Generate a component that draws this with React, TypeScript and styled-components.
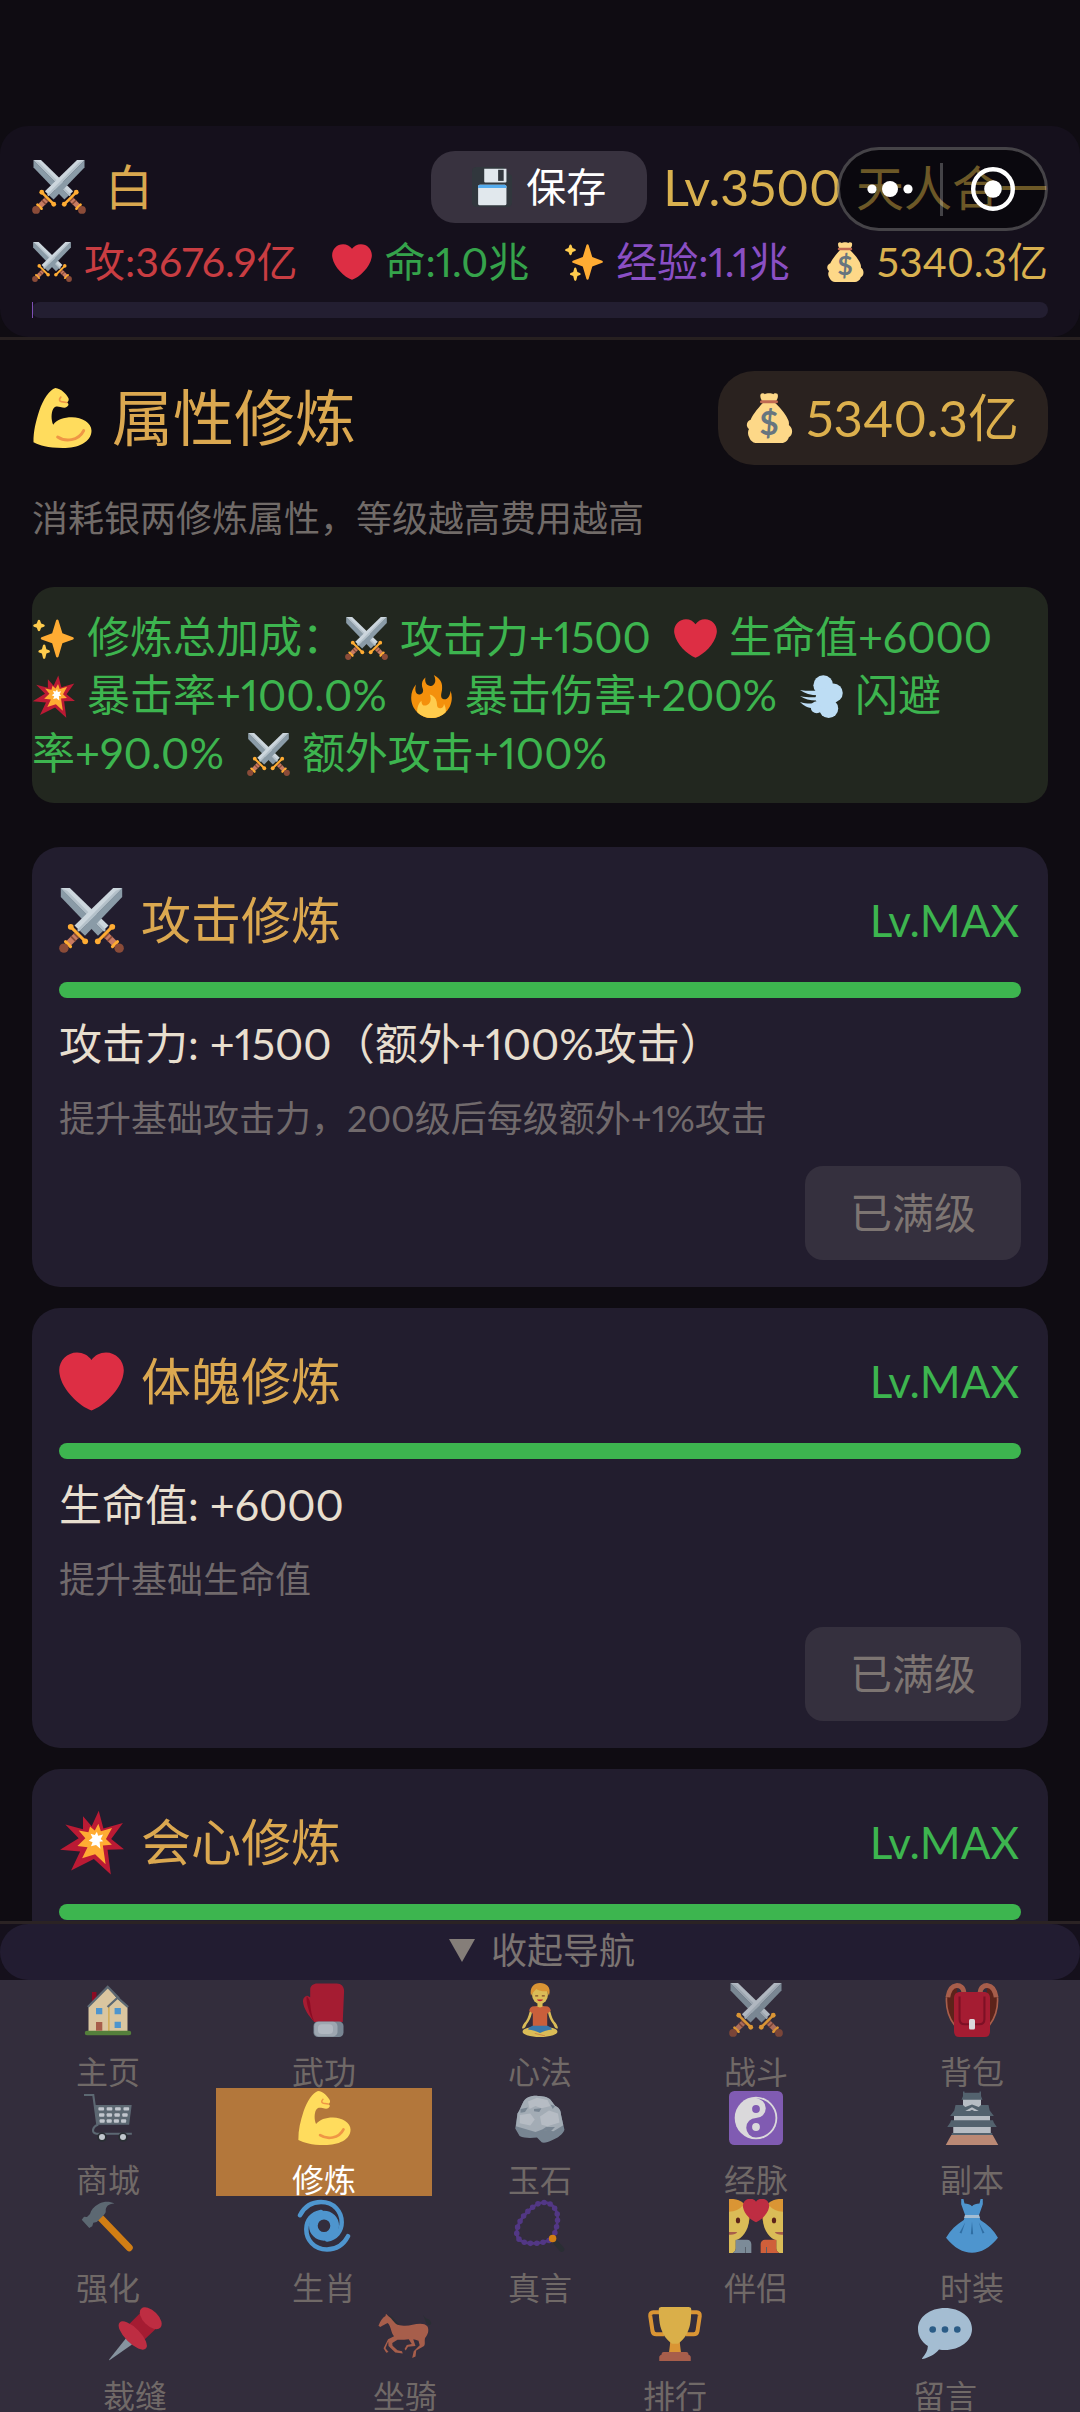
import { ReactNode, useState } from "react";
import styled, { createGlobalStyle } from "styled-components";

const GlobalStyle = createGlobalStyle`
  * {
    box-sizing: border-box;
  }
  body {
    margin: 0;
    background-color: #0f0c12;
    font-family: Lato, "Noto Sans CJK SC", sans-serif;
    font-variant-numeric: proportional-nums;
    -webkit-font-smoothing: antialiased;
  }
  button {
    font-family: inherit;
    border: none;
    padding: 0;
    margin: 0;
    cursor: pointer;
  }
  h1, h2, p {
    margin: 0;
    font-weight: 400;
  }
`;

const Page = styled.div`
  height: 100vh;
  display: flex;
  flex-direction: column;
  padding-top: 126px;
`;

const Header = styled.header`
  flex: none;
  position: relative;
  border-bottom: 3px solid #272020;
`;
const HeaderPanel = styled.div`
  padding: 25px 32px 19px;
  border-radius: 28px;
  background-color: #15101c;
`;
const HeaderTop = styled.div`
  display: flex;
  align-items: center;
  justify-content: space-between;
  height: 72px;
  font-size: 48px;
  line-height: 70px;
  color: #d9a84f;
`;
const PlayerName = styled.div`
  display: flex;
  align-items: center;
  gap: 19px;
`;
const HeaderRight = styled.div`
  display: flex;
  align-items: center;
  gap: 16px;
  white-space: nowrap;
`;
const Level = styled.div`
  display: flex;
  align-items: baseline;
  gap: 14px;
  color: #d9b14f;
`;
const LevelNumber = styled.span`
  font-size: 50px;
`;
const SaveButton = styled.button`
  display: flex;
  align-items: center;
  gap: 14px;
  height: 72px;
  padding: 0 41px;
  border-radius: 24px;
  background-color: #38323f;
  color: #ffffff;
  font-size: 40px;
  line-height: 70px;
`;
const StatRow = styled.div`
  display: flex;
  justify-content: space-between;
  margin-top: 15px;
  white-space: nowrap;
`;
const Stat = styled.span<{ $color: string }>`
  display: flex;
  align-items: center;
  gap: 12px;
  font-size: 41px;
  line-height: 48px;
  color: ${(props) => props.$color};
`;
const ExpTrack = styled.div`
  height: 16px;
  margin-top: 16px;
  border-radius: 8px;
  background-color: #231e31;
`;
const ExpFill = styled.div`
  width: 1px;
  height: 16px;
  background-color: #7d4fb5;
`;

/* floating mini-program menu, lies over the header */
const Capsule = styled.div`
  position: absolute;
  top: 21px;
  right: 32px;
  display: flex;
  align-items: center;
  width: 211px;
  height: 84px;
  padding-right: 2px;
  border: 3px solid rgba(255, 255, 255, 0.24);
  border-radius: 42px;
  background-color: rgba(0, 0, 0, 0.5);
`;
const CapsuleButton = styled.button`
  flex: 1;
  display: flex;
  align-items: center;
  justify-content: center;
  height: 78px;
  background: none;
`;
const CapsuleDivider = styled.span`
  width: 3px;
  height: 53px;
  background-color: rgba(255, 255, 255, 0.24);
`;

const Main = styled.main`
  flex: 1;
  min-height: 0;
  overflow-y: auto;
  scrollbar-width: none;
  padding: 31px 32px 0;
`;
const TitleRow = styled.div`
  display: flex;
  align-items: center;
  justify-content: space-between;
`;
const Title = styled.h1`
  display: flex;
  align-items: center;
  gap: 20px;
  font-size: 61px;
  line-height: 94px;
  color: #dba850;
`;
const Silver = styled.div`
  display: flex;
  align-items: center;
  gap: 12px;
  height: 94px;
  padding: 0 29px 0 26px;
  border-radius: 36px;
  background-color: #2a221f;
  font-size: 51px;
  line-height: 94px;
  color: #dcb04d;
`;
const Hint = styled.p`
  margin-top: 28px;
  font-size: 36px;
  line-height: 50px;
  color: #716b68;
`;
const Bonus = styled.p`
  margin-top: 44px;
  padding: 21px 0;
  border-radius: 22px;
  background-color: #22271f;
  font-size: 43px;
  line-height: 58px;
  color: #3db54f;
`;
const Keep = styled.span`
  white-space: nowrap;
`;
const BonusIcon = styled.span<{ $first?: boolean }>`
  display: inline-block;
  vertical-align: -7px;
  height: 43px;
  line-height: 0;
  margin-right: 12px;
  margin-left: ${(props) => (props.$first ? 0 : 12)}px;
`;

const CardList = styled.div`
  display: flex;
  flex-direction: column;
  gap: 21px;
  margin-top: 44px;
`;
const Card = styled.section`
  padding: 27px;
  border-radius: 28px;
  background-color: #221d2e;
`;
const CardHead = styled.div`
  display: flex;
  align-items: center;
  justify-content: space-between;
  height: 92px;
`;
const CardTitle = styled.h2`
  display: flex;
  align-items: center;
  gap: 17px;
  font-size: 50px;
  line-height: 92px;
  color: #dba850;
`;
const CardLevel = styled.span`
  padding-right: 2px;
  font-size: 44px;
  color: #3db54f;
`;
const Track = styled.div`
  height: 16px;
  margin-top: 16px;
  border-radius: 8px;
  background-color: #3db54f;
`;
const CardValue = styled.p`
  margin-top: 16px;
  font-size: 43px;
  line-height: 60px;
  color: #e8dfcf;
`;
const CardDesc = styled.p`
  margin-top: 19px;
  font-size: 36px;
  line-height: 50px;
  color: #716a6c;
`;
const CardFoot = styled.div`
  display: flex;
  justify-content: flex-end;
  margin-top: 23px;
`;
const TrainButton = styled.button`
  width: 216px;
  height: 94px;
  border-radius: 18px;
  background-color: #35303e;
  color: #7d7572;
  font-size: 42px;
  line-height: 94px;
`;

const Footer = styled.footer`
  flex: none;
  border-top: 3px solid #2b2324;
  background-color: #15101c;
`;
const ToggleButton = styled.button`
  display: flex;
  align-items: center;
  justify-content: center;
  gap: 16px;
  width: 100%;
  height: 56px;
  padding: 0 0 4px 4px;
  border-radius: 28px;
  background-color: #221c31;
  color: #7b7472;
  font-size: 36px;
  line-height: 52px;
`;
const Arrow = styled.span<{ $open: boolean }>`
  border-left: 13px solid transparent;
  border-right: 13px solid transparent;
  border-top: 23px solid #857e79;
  transform: ${(props) => (props.$open ? "none" : "rotate(180deg)")};
`;
const NavRow = styled.nav`
  display: flex;
  background-color: #332d3c;
`;
const NavItem = styled.button<{ $active: boolean }>`
  flex: 1;
  display: flex;
  flex-direction: column;
  align-items: center;
  gap: 19px;
  height: 108px;
  padding-top: 3px;
  background-color: ${(props) => (props.$active ? "#b3773b" : "transparent")};
  color: ${(props) => (props.$active ? "#ffffff" : "#706967")};
  font-size: 32px;
  line-height: 32px;
  svg {
    opacity: ${(props) => (props.$active ? 1 : 0.82)};
  }
`;

const IconSvg = styled.svg<{ $size: number }>`
  flex: none;
  display: block;
  width: ${(props) => props.$size}px;
  height: ${(props) => props.$size}px;
`;

const HEART =
  "M35.885 11.833c0-5.45-4.418-9.868-9.867-9.868-3.308 0-6.227 1.633-8.018 4.129-1.791-2.496-4.71-4.129-8.017-4.129-5.45 0-9.868 4.417-9.868 9.868 0 .772.098 1.52.266 2.241C1.751 22.587 11.216 31.568 18 34.034c6.783-2.466 16.249-11.447 17.617-19.959.17-.721.268-1.469.268-2.242z";

const sword = (
  <>
    <path fill="#CCD6DD" d="M35 0h-5L8.6 20.8l2.9 2.9z" />
    <path fill="#8A9BA7" d="M35 0v5L14.4 26.4l-2.9-2.7z" />
    <path fill="#B4C1CA" d="M35 0L11 24.2l-1-1L31.500 1.500z" />
    <path stroke="#C67A62" strokeWidth="3.600" d="M9.800 26.200L4.400 31.600" />
    <path stroke="#8A4B38" strokeWidth="1" d="M6.600 26.800l2.600 2.600M8.300 25.100l2.600 2.600" />
    <path stroke="#FFAC33" strokeWidth="1.700" strokeLinecap="round" d="M6.700 21.700l7.800 7.800M3.600 29.700l2.800 2.800" />
    <circle cx="6.500" cy="21.500" r="1.600" fill="#FFAC33" />
    <circle cx="14.500" cy="29.500" r="1.600" fill="#FFAC33" />
    <circle cx="2.700" cy="33.300" r="2.600" fill="#8A4B38" />
  </>
);

const lover = (shirt: string) => (
  <>
    <path fill="#FFAC33" d="M0 0c6-.6 12 2.500 13.600 9 .6 3.500-.2 7-1.600 9L0 14z" />
    <path fill="#FFDC5D" d="M0 8.500c4-.2 7-1.500 9-4 1.500 2.500 4.300 4 4.300 9.500C13.300 21 8 27 4.500 27.500V33c0 1.500-1 2.500-2 3H0z" />
    <path fill={shirt} d="M4.500 27.200H12c1.800 0 2.900 1.300 2.900 3V36H2.500c1.200-.8 2-1.800 2-3z" />
    <path stroke="#5C6870" strokeWidth=".600" d="M11 32v4" />
    <ellipse cx="6" cy="14.300" rx="1.400" ry="1.900" fill="#662113" />
    <path fill="#C1694F" d="M0 22h5.500c-.8 1.300-2.500 2-5.500 1.800z" />
  </>
);

const cartCells = [11.2, 16.700, 22.300, 27.900];

const icons: Record<string, ReactNode> = {
  swords: (
    <>
      <g transform="matrix(-1 0 0 1 36 0)">{sword}</g>
      {sword}
    </>
  ),
  heart: <path fill="#DD2E44" d={HEART} />,
  sparkles: (
    <>
      <path fill="#FFAC33" d="M34.347 16.893l-8.899-3.294-3.323-10.891c-.128-.42-.517-.708-.956-.708-.439 0-.828.288-.956.708l-3.322 10.891-8.9 3.294c-.393.146-.653.519-.653.938 0 .418.26.793.653.938l8.895 3.293 3.324 11.223c.126.424.516.715.959.715.442 0 .833-.291.959-.716l3.324-11.223 8.896-3.293c.391-.144.652-.518.652-.937 0-.418-.261-.792-.653-.938z" />
      <path fill="#FFCC4D" d="M14.347 27.894l-2.314-.856-.9-3.3c-.118-.436-.513-.738-.964-.738-.451 0-.846.302-.965.737l-.9 3.3-2.313.856c-.393.145-.653.52-.653.938 0 .418.26.793.653.938l2.301.853.907 3.622c.112.444.511.756.97.756.459 0 .858-.312.97-.757l.907-3.622 2.301-.853c.393-.144.653-.519.653-.937 0-.418-.26-.793-.653-.937zM10.009 6.231l-2.364-.875-.876-2.365c-.145-.393-.519-.653-.938-.653-.418 0-.792.26-.938.653l-.875 2.365-2.365.875c-.393.146-.653.52-.653.938 0 .418.26.793.653.938l2.365.875.875 2.365c.146.393.52.653.938.653.418 0 .792-.26.938-.653l.875-2.365 2.365-.875c.393-.146.653-.52.653-.938 0-.418-.26-.792-.653-.938z" />
    </>
  ),
  moneybag: (
    <>
      <path fill="#FDD888" d="M31.900 19.700C30.800 16.500 27.500 12 22.300 7h-8.600C9 12 5.500 17 4.800 19.200c-2 .6-3 2.600-2.700 4.400.2 1.100.9 1.800 1.500 2.400-1 1.700-1 4 .2 6C5 35 7.200 36 9 36h18c2 0 4.300-1.200 5.300-4.200 1.800-1 2.700-3 2.200-5.400-.3-1.600-1.200-2.600-2.200-3.400.2-1.300 0-2.400-.4-3.300z" />
      <path fill="#FDD888" d="M24 .6c-1-.9-2.600-.4-3 .3-.8-1-5-1-6 0-.6-.8-2.400-1-3 0-.7 1 .1 4 1.200 5h9.600c1.300-1 2.200-4 1.200-5.300z" />
      <path fill="#BF6952" d="M12.600 5.200h10.800a1 1 0 0 1 0 2.200H12.600a1 1 0 0 1 0-2.200z" />
      <text x="18" y="30" textAnchor="middle" fontFamily="Lato, sans-serif" fontWeight="700" fontSize="24" fill="#67757F">$</text>
    </>
  ),
  floppy: (
    <>
      <path fill="#31373D" d="M4 0h24l8 8v24a4 4 0 0 1-4 4H4a4 4 0 0 1-4-4V4a4 4 0 0 1 4-4z" />
      <path fill="#E1E8ED" d="M11 1.500h20V13a1 1 0 0 1-1 1H12a1 1 0 0 1-1-1z" />
      <path fill="#31373D" d="M23.500 2.500h5v10h-5z" />
      <rect x="5.500" y="16" width="25.500" height="18.500" rx="1.500" fill="#E1E8ED" />
      <path fill="#55ACEE" d="M7 16h22.500a1.500 1.500 0 0 1 1.500 1.500V19H5.500v-1.500A1.500 1.500 0 0 1 7 16z" />
    </>
  ),
  muscle: (
    <>
      <path fill="#FFDC5D" d="M14 0c-3.500 1-7.400 7-9.600 13.500C2.300 20 .8 26 .9 32.600 5 34.500 9 36 18.500 36c9 0 17.200-3.500 17.200-10.400C35.700 21 30 17.600 24 17.600c-5 0-8.900 1.400-11.300 4.400-1.300-3-1.200-7.200 0-9.400 1-1.800 2.600-1.600 4.300-1.200 2.300.5 3.700.8 4.800-1 .3-.9-.3-1.400-.9-1.700.9-.5 1.400-1.500 1-2.600C20.500 3.500 17.500.3 14 0z" />
      <path fill="none" stroke="#EF9645" strokeWidth="1.800" strokeLinecap="round" d="M15.400 29.400c4.500 3 12.500 2.500 15.600-3.800" />
      <path fill="none" stroke="#EF9645" strokeWidth="1" strokeLinecap="round" d="M17.300 5.500c-1.300 1.300-.9 2.400.3 2.700l3.200.5" />
    </>
  ),
  collision: (
    <>
      <path fill="#BB1A34" d="M22 .4l2.600 9.800 10.800-3-6.500 8.900 7.100 5.600-9.100.3 1.800 13.700-9.400-8.500-12.600 6.300 5-10.500-11.100-1 10.300-6.400-7.400-7.500 9.800 2.500V3.500L18.100 9z" />
      <path fill="#FFAC33" d="M21.800 7.600l1.400 4.200 6.200-1.900-3.400 6.200 3.300 3.200-5 .3 1.500 10.400-5.800-5.500-7.200 2.200 3-6.100-5.600-.7 4.400-4.300-3.700-4.300 5.400 1 .9-3.200 2.600 2.200z" />
      <path fill="#fff" d="M21 12l.7 2.300 2.700-.8-1.300 2.500 1.400 1.300-2 .3.4 3.800-2.400-2-2.800.7.9-2.300-2.100-.8 2-1.600-1-2.200 2.300.7z" />
    </>
  ),
  fire: (
    <>
      <path fill="#F4900C" d="M35 19c0-2.062-.367-4.039-1.04-5.868-.46 5.389-3.333 8.157-6.335 6.868-2.812-1.208-.917-5.917-.777-8.164.236-3.809-.012-8.169-6.931-11.794 2.875 5.5.333 8.917-2.333 9.125-2.958.231-5.667-2.542-4.667-7.042-3.238 2.386-3.332 6.402-2.333 9 1.042 2.708-.042 4.958-2.583 5.208-2.84.28-4.418-3.041-2.963-8.333C2.52 10.965 1 14.805 1 19c0 9.389 7.611 17 17 17s17-7.611 17-17z" />
      <path fill="#FFCC4D" d="M28.394 23.999c.148 3.084-2.561 4.293-4.019 3.709-2.106-.843-1.541-2.291-2.083-5.291s-2.625-5.083-5.708-6c2.25 6.333-1.247 8.667-3.08 9.084-1.872.426-3.753-.001-3.968-4.007C7.352 23.668 6 26.676 6 30c0 .368.023.73.055 1.09C9.125 34.124 13.342 36 18 36s8.875-1.876 11.945-4.91c.032-.36.055-.722.055-1.09 0-2.187-.584-4.236-1.606-6.001z" />
    </>
  ),
  dash: (
    <g fill="#BDDDF4">
      <circle cx="19.500" cy="8.500" r="8.300" />
      <circle cx="28" cy="15" r="7.800" />
      <circle cx="24" cy="28" r="8" />
      <circle cx="14" cy="27" r="5" />
      <circle cx="21" cy="19" r="8" />
      <path d="M0 12.500c5 .8 9 1 15 .5v4C9 17 4 15.500 0 12.500zM0 17.500c5 1.200 9 1.300 15 1v2.800c-6 .2-11-1-15-3.800zM0 22.500c4.500 1.500 8.500 1.700 14 1v4C8 28.500 3.500 26 0 22.500z" />
    </g>
  ),
  house: (
    <>
      <path fill="#A0041E" d="M7.300 6h3v8h-3z" />
      <path fill="#FFE8B6" d="M5 15L17.800 3l6 7 7.200 6v16.500H5z" />
      <path stroke="#F4C242" strokeWidth=".800" d="M18.600 16v16" />
      <path fill="none" stroke="#66757F" strokeWidth="1.500" d="M4.600 16L17.800 2.600l7.500 7.600" />
      <path fill="none" stroke="#66757F" strokeWidth="1.500" d="M17.700 16l6.700-6.200 7 6.300" />
      <path fill="#5C913B" d="M4 31.800h28a1.500 1.500 0 0 1 0 3H4a1.500 1.500 0 0 1 0-3z" />
      <path fill="#55ACEE" d="M10 16.700h4.200v4.200H10zM22.400 16.700h4.200v4.200h-4.200zM22.400 25.800h4.200V30h-4.200z" />
      <path fill="#C1694F" d="M10 26h4.200v5.800H10z" />
    </>
  ),
  glove: (
    <>
      <path fill="#BE1931" d="M8.800 4.500C8.800 1.800 11 .4 13.500.4h13c3 0 4.900 2 4.900 5L30.500 26H11.500C8 22 4.500 17.500 4 12.500 3.800 10.200 5.500 8.500 7 8.500l1.800 1z" />
      <path fill="#A0041E" d="M6.500 8.700c1.500 1.800 2.300 3.400 2.400 5.800.2 3 .9 7.500 2.600 11.300C9 23 7.500 17 6.800 14c-.4-2-.6-4-.3-5.300z" />
      <rect x="11" y="25.600" width="20" height="10.400" rx="3" fill="#8899A6" />
      <rect x="11.500" y="25.800" width="15.500" height="9.800" rx="3" fill="#B5C1CA" />
      <rect x="14" y="27.500" width="10" height="6.500" rx="2.500" fill="#CCD6DD" />
    </>
  ),
  lotus: (
    <>
      <path fill="#FFDC5D" d="M16.300 12h3.400v3.500l4.300 1.300c1.500 3.200 1.600 6.200 3.400 8.700 1.700 1.700 2.300 3 2.600 4.700-1.500.7-2.500-1-3-2.500-2.200-2.700-3-5-3.600-7.700H12.600c-.6 2.700-1.400 5-3.600 7.700-.5 1.500-1.500 3.200-3 2.500.3-1.700.9-3 2.600-4.700 1.800-2.500 1.900-5.500 3.400-8.700l4.300-1.300z" />
      <path fill="#EA6A3B" d="M14 15.500h2c1 1 3 1 4 0h2c1.800 0 3 1.200 3.200 3l-2.400 2V29h-9.600v-8.500l-2.400-2c.2-1.800 1.400-3 3.200-3z" />
      <path fill="#FFDC5D" d="M9.500 30c4-1.200 13-1.200 17 0 3 .8 4 2.500 2.300 3.800-2.800 1.500-5.500 1.800-8.300 2.200h-5c-2.800-.4-5.500-.7-8.300-2.200C5.500 32.500 6.500 30.800 9.500 30z" />
      <path fill="#3B88C3" d="M13 28.500h10c1.500.5 2.500 1.400 3 2.500-3 .3-5.500 1-8 2.300-2.500-1.300-5-2-8-2.300.5-1.100 1.500-2 3-2.500z" />
      <path stroke="#EF9645" strokeWidth=".600" d="M14.500 33.600l6.800 1.600" />
      <ellipse cx="18" cy="8" rx="5.300" ry="5.800" fill="#FFDC5D" />
      <path fill="#FFAC33" d="M12 8.500C10.800 3 14 0 18 0s7.800 2.500 6 8.500l-1.300-3C20 5.800 17 5 15.500 4c-1 1.500-2.700 2.500-3.500 4.500z" />
      <path stroke="#662113" strokeWidth=".600" d="M14.800 8.600h2M19.200 8.600h2" />
      <path fill="#DF1F32" d="M16 11h4c-.5 1.500-3.500 1.500-4 0z" />
    </>
  ),
  backpack: (
    <>
      <path fill="#662113" d="M6 28C2 23 .5 16 1 9.500 1.800 4 4.500 1.500 8 3v20zM30 28c4-5 5.500-12 5-18.500C34.200 4 31.500 1.500 28 3v20z" />
      <path fill="none" stroke="#C1694F" strokeWidth="1.100" d="M6.300 28C2.500 23 .6 16 1 9.500M29.700 28c3.800-5 5.700-12 5.300-18.500" />
      <path fill="none" stroke="#C1694F" strokeWidth="3.200" d="M12.600 7C12.600 3 10 1.500 7.500 1.700 4.600 2 2.600 5 1.900 9.500M23.400 7c0-4 2.600-5.500 5.100-5.300 2.900.3 4.900 3.300 5.600 7.800" />
      <path fill="#BE1931" d="M10 6h16c2.500 0 4 1.500 4 4v22c0 2.500-1 4-3.500 4h-17C7 36 6 34.500 6 32V10c0-2.500 1.500-4 4-4z" />
      <path fill="none" stroke="#8E0A20" strokeWidth="1.400" d="M9.700 9v15c0 2.500 1 3.500 3.500 3.500h9.600c2.500 0 3.500-1 3.500-3.500V9" />
      <rect x="16" y="24" width="4" height="7" rx="1" fill="#fff" />
    </>
  ),
  cart: (
    <>
      <path fill="none" stroke="#66757F" strokeWidth="1.400" d="M2 2.700h6.200l2.700 20c-3.500 1.500-4 5.500-.5 5.800h23.500" />
      <path fill="#66757F" d="M9.300 9.300h24.500l-1.700 13.200H10.900z" />
      {[10.800, 14.900, 18.900].map((y, row) =>
        cartCells.map((x, i) => (
          <rect key={`${y}${i}`} x={x - row * (i - 1) * 0.400 + 0.400} y={y} width={3.800 - row * 0.200} height="2.200" rx=".600" fill="#E1E8ED" />
        ))
      )}
      <circle cx="14" cy="30.700" r="3.200" fill="#292F33" />
      <circle cx="28" cy="30.700" r="3.200" fill="#292F33" />
      <circle cx="14" cy="30.700" r="2" fill="#E1E8ED" />
      <circle cx="28" cy="30.700" r="2" fill="#E1E8ED" />
    </>
  ),
  rock: (
    <>
      <path fill="#8899A6" d="M7 7c2-3 6-4 9.600-3.700 3 0 6.500.5 8.400 2.500l3 4c2.500 1 4 3 4 6l2.300 10c-1 3-4.500 5.500-8.300 7-2.500 1.200-4.500 2-6.700 1.600L16 31c-4.500.5-8.500.5-11.600-1L1.500 25 3 15c1.500-2 2.500-5 4-8z" />
      <path fill="#BCC8D0" d="M7 7c2-3 6-4 9.600-3.700 3 0 6.500.5 8.400 2.500l3 4c2.500 1 4 3 4 6l1.500 7-6.500 4-8-1-4 1.500L2 23.500 3 15c1.500-2 2.500-5 4-8z" />
      <path fill="#D3DCE2" d="M10 7l6-2.500L23 6l2 4-6 1.500-4-1.500-4 2zM18 17l6-4 6 2 1 6-8 2.500-4-1zM4.500 16l7-1 3 4-3 4-7-1.500z" />
      <path fill="#8899A6" d="M14 12l5-.5-1.500 2.500-3.500-.5zM25 9l3 1-1.500 2zM5 12l5-1-2 3-3 .5zM22 24h6l-3 3-6-1zM3 25l5 2 6 .5-1 2-8-1z" />
    </>
  ),
  yinyang: (
    <>
      <rect width="36" height="36" rx="3.600" fill="#9266CC" />
      <circle cx="18" cy="18" r="14.200" fill="#fff" />
      <path fill="#9266CC" d="M18 5a13 13 0 0 1 0 26 6.500 6.500 0 0 1 0-13 6.500 6.500 0 0 0 0-13z" />
      <circle cx="18" cy="12" r="2.600" fill="#9266CC" />
      <circle cx="18" cy="24" r="2.600" fill="#fff" />
    </>
  ),
  castle: (
    <>
      <path fill="#D5DDE2" d="M12 5h12v6H12zM6 16h24v4H6zM5.500 23h25v5.500h-25z" />
      <path fill="#5B6E7A" d="M12 .400h1v.800h10V.400h1v3l1 2.400H11l1-2.400zM7 9.400h5l1.500 1.200L18 9l4.500 1.600L24 9.400h5l.8 3.600 2.800 3.600H3.400L6.200 13zM4 19.500h28l.5 1.500 2 3H1.500l2-3zM4.500 28h27v1.500h-27z" />
      <path fill="#D5DDE2" d="M18 10.800l4.500 2.500h-3L18 12.500l-1.500.8h-3z" />
      <path fill="#D99E82" d="M4.200 29.300h27.600L35.500 36H.500z" />
    </>
  ),
  hammer: (
    <>
      <path stroke="#F4900C" strokeWidth="4.600" strokeLinecap="round" d="M13 12.500l19.200 20" />
      <path fill="#66757F" d="M22.300 3C18 3 16.300 5.500 16.500 8c.1 1.200-.6 2-1.500 2.800l-4.500 4.500-2.300.6-.7 2.300-2 1.200-5-5.600 1.500-2 2 .2 2-2C6.500 7.500 8.500 5 12 3.200c3.500-1.700 7-1.700 10.300-.2z" />
    </>
  ),
  cyclone: (
    <g fill="none" stroke="#55ACEE" strokeLinecap="round">
      <circle cx="18" cy="17.800" r="7.100" strokeWidth="5.800" />
      <path strokeWidth="3" d="M2 10.800C5 5 10 2 16 2c8.800 0 13.800 6.500 13.800 13.500 0 6-3.800 10.500-9.800 11.500" />
      <path strokeWidth="3" d="M34 24.800C31 30.600 26 33.600 20 33.600c-8.800 0-13.800-6.500-13.800-13.500 0-6 3.800-10.500 9.800-11.500" />
    </g>
  ),
  beads: (
    <>
      <path fill="none" stroke="#5A3A96" strokeWidth="1.800" d="M26.400 26.400C28.500 22 31 13 29 8.500 26.500 2 20 .5 14.500 4.500 8 9 2.500 16 2.500 22.500 2.500 30 12 30.500 20 28.800c3-.8 5-1.300 6.400-2.400z" />
      <path fill="none" stroke="#5A3A96" strokeWidth="3.700" strokeLinecap="round" strokeDasharray="0 4.200" d="M26.400 26.400C28.500 22 31 13 29 8.500 26.500 2 20 .5 14.500 4.500 8 9 2.500 16 2.500 22.500 2.500 30 12 30.500 20 28.800c3-.8 5-1.300 6.400-2.400z" />
      <path stroke="#292F33" strokeWidth="3.500" strokeLinecap="round" d="M28.500 29l4 4.500" />
      <circle cx="26.400" cy="26.400" r="2.500" fill="#F4900C" />
    </>
  ),
  couple: (
    <>
      {lover("#8DA0AD")}
      <g transform="matrix(-1 0 0 1 36 0)">{lover("#F26B3A")}</g>
      <path fill="#DD2E44" transform="translate(9.200 -1.200) scale(.49)" d={HEART} />
    </>
  ),
  dress: (
    <>
      <path fill="#55ACEE" d="M10.800 0h1.500l.7 3c2 0 4 .6 5 1.800C19 3.600 21 3 23 3l.7-3h1.500v3.500L22.600 11l1 3c5 3 9 7 11.700 11.800C30 32.500 24 35.800 18 35.800S6 32.500.7 25.800C3.500 21 7.500 17 12.500 14l1-3-2.700-7.500z" />
      <path fill="#BDDDF4" d="M13.300 10.600h9.400l.6 2H12.700z" />
      <path fill="#2F7DBB" d="M18 15l.8 8.500h-1.600zM13.500 15.500L11 23l-1.300-.5zM22.500 15.500L25 23l1.300-.5z" />
    </>
  ),
  pushpin: (
    <>
      <path fill="#99AAB5" d="M12 20.800l4 4.200L1 35.500c-.4 0-.3-.4 0-.9z" />
      <path fill="#BE1931" d="M22 3.500L32.500 14l-8.500 8L14 11.500z" />
      <ellipse cx="16.500" cy="19" rx="12.300" ry="5" transform="rotate(45 16.500 19)" fill="#DD2E44" />
      <ellipse cx="28.500" cy="7.500" rx="9" ry="5" transform="rotate(45 28.500 7.500)" fill="#DD2E44" />
    </>
  ),
  horse: (
    <>
      <path fill="#292F33" d="M30 5c1.500 4 5 2 5.500 6-1 1.500-2 1-3 .5zM7 5.500c3 1 5 4 7 6l-2 1-5-5z" />
      <path fill="#C1694F" d="M.3 12.500C1.500 9.500 3 7 5 6l.3-1.500L7 6.200c2.500 1.500 3.500 4.500 6 5.600 4.500 1 7 .7 10 0 4-.8 8-1.300 10 1.200 1.200 2.500.3 5.500-1.500 7.500-.8 2 .3 4-.8 5.500L25.500 29l-.5 4-2.200 1 1-4.500 4-4-.8-3c-1.500-.5-2.500-.8-3.500-1l1.500 4.500-5 .5-1.500 2.500-.8-1 1.500-2.700 3.300-.6-2-3.200c-3 .3-5.500.5-7.500.3L9.500 24l.2 1.800 3.300 3 3 .7.5 1.500-5-.7-4.500-4.300-.2-3L5 27.500l2 2.500-1.500.5-1.800-3 3-6 4-2C8.500 17 9 13.500 6.500 10.700c-1.500.3-3 1.800-5 2.600z" />
    </>
  ),
  trophy: (
    <>
      <path fill="none" stroke="#FFAC33" strokeWidth="2.700" d="M9 3.500H3.500C2 3.500 1.400 4.500 1.500 6L3 16c.3 1.500 1 2.200 2.500 2.200H11M27 3.500h5.500c1.500 0 2.100 1 2 2.500L33 16c-.3 1.500-1 2.200-2.500 2.200H25" />
      <path fill="#FFAC33" d="M15 22h6l1 8.500h-8z" />
      <path fill="#FFCC4D" d="M7.200 1.500C7.200.5 8 0 9 0h18c1 0 1.800.5 1.800 1.500 0 8-.8 12.500-3.300 17-1.700 3-3.500 4.500-5.500 6h-4c-2-1.500-3.800-3-5.500-6-2.500-4.500-3.300-9-3.300-17z" />
      <path fill="#C1694F" d="M10.500 30h15c1 0 1.500.8 1.500 1.800.8.200 1.500.8 1.500 1.700V36h-21v-2.500c0-.9.7-1.500 1.500-1.700 0-1 .5-1.800 1.500-1.800z" />
    </>
  ),
  speech: (
    <>
      <path fill="#BDDDF4" d="M18 .700c10 0 18 6 18 14s-8 14-18 14c-1.300 0-2.700 0-4-.3-2.500 3-6.500 5.500-11 6.300-.6 0-.4-.4 0-.8C5 31.500 6.500 29 6.600 26 2.500 23.500 0 19.500 0 14.700 0 6.700 8 .7 18 .7z" />
      <circle cx="9.800" cy="15" r="2.200" fill="#2A6797" />
      <circle cx="18" cy="15" r="2.200" fill="#2A6797" />
      <circle cx="26.200" cy="15" r="2.200" fill="#2A6797" />
    </>
  ),
};

function Icon({ name, size }: { name: string; size: number }) {
  return (
    <IconSvg $size={size} viewBox="0 0 36 36" fill="none" aria-hidden="true">
      {icons[name]}
    </IconSvg>
  );
}

interface ITraining {
  icon: string;
  name: string;
  value?: string;
  desc?: string;
}

const trainings: ITraining[] = [
  { icon: "swords", name: "攻击修炼", value: "攻击力: +1500（额外+100%攻击）", desc: "提升基础攻击力，200级后每级额外+1%攻击" },
  { icon: "heart", name: "体魄修炼", value: "生命值: +6000", desc: "提升基础生命值" },
  { icon: "collision", name: "会心修炼" },
];

const navRows = [
  [
    { icon: "house", label: "主页" },
    { icon: "glove", label: "武功" },
    { icon: "lotus", label: "心法" },
    { icon: "swords", label: "战斗" },
    { icon: "backpack", label: "背包" },
  ],
  [
    { icon: "cart", label: "商城" },
    { icon: "muscle", label: "修炼" },
    { icon: "rock", label: "玉石" },
    { icon: "yinyang", label: "经脉" },
    { icon: "castle", label: "副本" },
  ],
  [
    { icon: "hammer", label: "强化" },
    { icon: "cyclone", label: "生肖" },
    { icon: "beads", label: "真言" },
    { icon: "couple", label: "伴侣" },
    { icon: "dress", label: "时装" },
  ],
  [
    { icon: "pushpin", label: "裁缝" },
    { icon: "horse", label: "坐骑" },
    { icon: "trophy", label: "排行" },
    { icon: "speech", label: "留言" },
  ],
];

function App() {
  const [active, setActive] = useState("修炼");
  const [navOpen, setNavOpen] = useState(true);

  return (
    <Page>
      <GlobalStyle />
      <Header>
        <HeaderPanel>
          <HeaderTop>
            <PlayerName>
              <Icon name="swords" size={54} />
              <span>白</span>
            </PlayerName>
            <HeaderRight>
              <SaveButton type="button">
                <Icon name="floppy" size={40} />
                保存
              </SaveButton>
              <Level>
                <LevelNumber>Lv.3500</LevelNumber>
                <span>天人合一</span>
              </Level>
            </HeaderRight>
          </HeaderTop>
          <StatRow>
            <Stat $color="#c93d42"><Icon name="swords" size={40} />攻:3676.9亿</Stat>
            <Stat $color="#35a34b"><Icon name="heart" size={40} />命:1.0兆</Stat>
            <Stat $color="#8a4fc4"><Icon name="sparkles" size={40} />经验:1.1兆</Stat>
            <Stat $color="#d9b14f"><Icon name="moneybag" size={40} />5340.3亿</Stat>
          </StatRow>
          <ExpTrack>
            <ExpFill />
          </ExpTrack>
        </HeaderPanel>
        <Capsule>
          <CapsuleButton type="button" aria-label="更多">
            <svg width="46" height="18" viewBox="0 0 46 18" fill="#fff">
              <circle cx="5" cy="9" r="4.600" />
              <circle cx="23" cy="9" r="8" />
              <circle cx="41" cy="9" r="4.600" />
            </svg>
          </CapsuleButton>
          <CapsuleDivider />
          <CapsuleButton type="button" aria-label="关闭">
            <svg width="46" height="46" viewBox="0 0 46 46" fill="none">
              <circle cx="23" cy="23" r="19.800" stroke="#fff" strokeWidth="4.400" />
              <circle cx="23" cy="23" r="8.800" fill="#fff" />
            </svg>
          </CapsuleButton>
        </Capsule>
      </Header>

      <Main>
        <TitleRow>
          <Title>
            <Icon name="muscle" size={60} />
            属性修炼
          </Title>
          <Silver>
            <Icon name="moneybag" size={50} />
            5340.3亿
          </Silver>
        </TitleRow>
        <Hint>消耗银两修炼属性，等级越高费用越高</Hint>
        <Bonus>
          <BonusIcon $first><Icon name="sparkles" size={43} /></BonusIcon>
          修炼总加成：
          <Keep><BonusIcon $first><Icon name="swords" size={43} /></BonusIcon>攻击力+1500</Keep>{" "}
          <Keep><BonusIcon><Icon name="heart" size={43} /></BonusIcon>生命值+6000</Keep>{" "}
          <Keep><BonusIcon $first><Icon name="collision" size={43} /></BonusIcon>暴击率+100.0%</Keep>{" "}
          <Keep><BonusIcon><Icon name="fire" size={43} /></BonusIcon>暴击伤害+200%</Keep>{" "}
          <BonusIcon><Icon name="dash" size={43} /></BonusIcon>闪避<Keep>率+90.0%</Keep>{" "}
          <Keep><BonusIcon><Icon name="swords" size={43} /></BonusIcon>额外攻击+100%</Keep>
        </Bonus>

        <CardList>
          {trainings.map((item) => (
            <Card key={item.name}>
              <CardHead>
                <CardTitle>
                  <Icon name={item.icon} size={65} />
                  {item.name}
                </CardTitle>
                <CardLevel>Lv.MAX</CardLevel>
              </CardHead>
              <Track />
              {item.value && (
                <>
                  <CardValue>{item.value}</CardValue>
                  <CardDesc>{item.desc}</CardDesc>
                  <CardFoot>
                    <TrainButton type="button">已满级</TrainButton>
                  </CardFoot>
                </>
              )}
            </Card>
          ))}
        </CardList>
      </Main>

      <Footer>
        <ToggleButton type="button" onClick={() => setNavOpen(!navOpen)}>
          <Arrow $open={navOpen} />
          收起导航
        </ToggleButton>
        {navOpen &&
          navRows.map((row) => (
            <NavRow key={row[0].label}>
              {row.map((item) => (
                <NavItem
                  key={item.label}
                  type="button"
                  $active={item.label === active}
                  onClick={() => setActive(item.label)}
                >
                  <Icon name={item.icon} size={54} />
                  {item.label}
                </NavItem>
              ))}
            </NavRow>
          ))}
      </Footer>
    </Page>
  );
}

export default App;
